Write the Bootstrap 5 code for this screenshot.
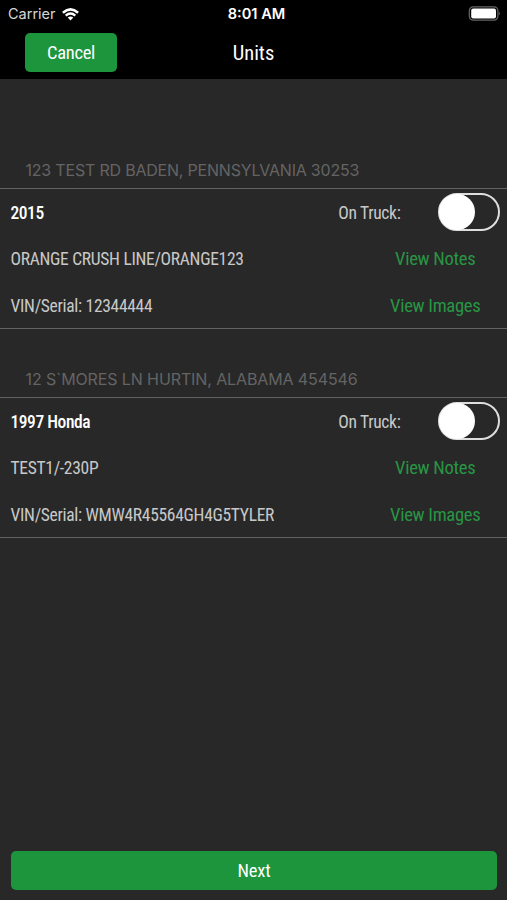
<!DOCTYPE html>
<html lang="en">
<head>
<meta charset="utf-8">
<meta name="viewport" content="width=device-width, initial-scale=1">
<title>Units</title>
<link href="https://cdn.jsdelivr.net/npm/bootstrap@5.3.0/dist/css/bootstrap.min.css" rel="stylesheet">
<style>
body{background:#282828;color:#c8c8c8;font-family:"Roboto Condensed",Roboto,sans-serif;font-stretch:75%;font-size:17.5px;letter-spacing:-.3px;line-height:24px;height:900px;overflow:hidden}
.topbar{background:#000;height:79px;color:#fff}
.status{height:28px;font:14.5px/28px Inter,sans-serif;letter-spacing:0;padding:0 7px 0 8px;display:grid;grid-template-columns:1fr auto 1fr}
.status .carrier{color:#d6d6d6}
.status .clock{font-weight:600;font-size:14.6px;padding-left:5px}
.wifi{margin-left:6px}
.titlebar{height:51px;padding:5px 25px 7px;display:grid;grid-template-columns:1fr auto 1fr}
.action{--bs-btn-bg:#1c953c;--bs-btn-color:#fff;--bs-btn-hover-bg:#187f33;--bs-btn-hover-color:#fff;--bs-btn-border-width:0;--bs-btn-border-radius:5px;--bs-btn-font-size:18.5px;height:39px;line-height:24px;letter-spacing:-.3px}
.cancel{width:92px}
.next{padding:1px 0 0;letter-spacing:-.15px}
.title{font-size:20.5px;letter-spacing:0}
.address{font:16px/24px Inter,sans-serif;letter-spacing:-.2px;color:#646464;padding-left:25.5px;margin:38px 0 6px}
.address:first-child{margin-top:79px}
.unit + .address{letter-spacing:-.11px}
.unit{border-top:1px solid #626262;border-bottom:1px solid #626262;height:141px;padding:0 7.5px 0 10.5px}
.line{height:46.5px}
.caption{padding-top:1px}
.name{color:#fff;font-weight:500;letter-spacing:-.45px}
.view{color:#289544;font-size:18.6px;text-decoration:none;width:128.5px;text-align:center;padding-top:1px}
.view:hover{color:#35b556}
.on{width:62px;height:38px;border:2px solid #dedede;border-radius:19px;margin-left:37px}
.knob{width:36px;height:36px;border-radius:50%;background:#fff;display:block;margin:-1px 0 0 -1px}
.footer-action{padding:0 10px 10px 11px}
</style>
</head>
<body class="d-flex flex-column">
<header class="topbar">
<div class="status">
<div class="d-flex align-items-center"><span class="carrier">Carrier</span>
<svg class="wifi" width="17" height="13" viewBox="0 0 17 13" fill="none" stroke="#fff" stroke-width="2.5"><path d="M.9 4.7Q8.5-1.9 16.1 4.7M3.7 7.6Q8.5 3.5 13.3 7.6"/><path d="M5.7 9.6Q8.5 7.3 11.3 9.6L8.5 12.4Z" fill="#fff" stroke="none"/></svg></div>
<span class="clock">8:01 AM</span>
<div class="d-flex align-items-center justify-content-end"><svg width="32" height="16" viewBox="0 0 32 16"><rect x="1.3" y=".8" width="28.6" height="13.4" rx="4" fill="none" stroke="#666" stroke-width="1.2"/><rect x="3.2" y="2.6" width="24.8" height="9.8" rx="2" fill="#fff"/><path d="M30.9 5.6Q32.5 7.5 30.9 9.6Z" fill="#777"/></svg></div>
</div>
<div class="titlebar align-items-center"><div><button class="btn action cancel p-0">Cancel</button></div><span class="title">Units</span></div>
</header>
<main class="d-flex flex-column flex-grow-1">
<h2 class="address">123 TEST RD BADEN, PENNSYLVANIA 30253</h2>
<section class="unit">
<div class="line d-flex align-items-center"><span class="caption name me-auto">2015</span><span class="caption">On Truck:</span><span class="on" role="switch" aria-checked="false"><span class="knob"></span></span></div>
<div class="line d-flex align-items-center"><span class="me-auto">ORANGE CRUSH LINE/ORANGE123</span><a class="view" href="#">View Notes</a></div>
<div class="line d-flex align-items-center"><span class="caption me-auto">VIN/Serial: 12344444</span><a class="view" href="#">View Images</a></div>
</section>
<h2 class="address">12 S`MORES LN HURTIN, ALABAMA 454546</h2>
<section class="unit">
<div class="line d-flex align-items-center"><span class="caption name me-auto">1997 Honda</span><span class="caption">On Truck:</span><span class="on" role="switch" aria-checked="false"><span class="knob"></span></span></div>
<div class="line d-flex align-items-center"><span class="me-auto">TEST1/-230P</span><a class="view" href="#">View Notes</a></div>
<div class="line d-flex align-items-center"><span class="caption me-auto">VIN/Serial: WMW4R45564GH4G5TYLER</span><a class="view" href="#">View Images</a></div>
</section>
</main>
<footer class="footer-action"><button class="btn action next w-100">Next</button></footer>
<script src="https://cdn.jsdelivr.net/npm/bootstrap@5.3.0/dist/js/bootstrap.bundle.min.js"></script>
</body>
</html>
